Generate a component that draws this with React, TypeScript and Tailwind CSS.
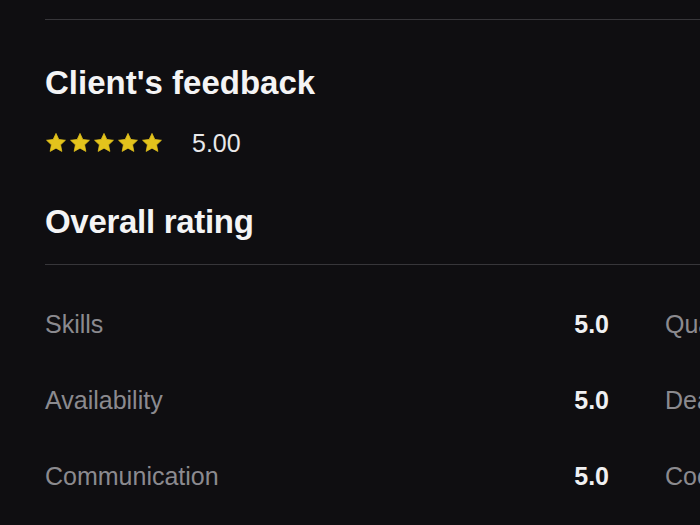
import React from "react";

const rows: [string, string, string, string][] = [
  ["Skills", "5.0", "Quality of work", "5.0"],
  ["Availability", "5.0", "Deadlines", "5.0"],
  ["Communication", "5.0", "Cooperation", "5.0"],
];

const Star = () => (
  <svg width="22" height="22" viewBox="0 0 24 24" className="shrink-0">
    <path
      d="M12 1.5l3.1 6.6 7.2.9-5.3 5 1.4 7.2L12 17.6l-6.4 3.6 1.4-7.2-5.3-5 7.2-.9z"
      fill="#e3c31c"
      stroke="#e3c31c"
      strokeWidth="0.8"
      strokeLinejoin="round"
    />
  </svg>
);

export default function App() {
  return (
    <div
      className="h-[525px] w-[700px] overflow-hidden bg-[#0f0e11] pl-[45px] pt-[19px]"
      style={{ fontFamily: '"Liberation Sans", Arial, sans-serif' }}
    >
      <div className="h-px w-[1300px] bg-[#37363a]" />

      <h2 className="mt-[43px] text-[33px] font-bold leading-[40px] text-[#f4f4f5]">
        Client's feedback
      </h2>

      <div className="mt-[28px] flex h-[24px] items-center">
        <div className="flex gap-[2px]">
          <Star />
          <Star />
          <Star />
          <Star />
          <Star />
        </div>
        <span className="ml-[29px] text-[25px] leading-[24px] text-[#e8e8ea]">5.00</span>
      </div>

      <h2 className="mt-[47px] text-[33px] font-bold tracking-[-0.3px] leading-[40px] text-[#f4f4f5]">
        Overall rating
      </h2>

      <div className="mt-[22px] h-px w-[1300px] bg-[#37363a]" />

      <div className="mt-[44px] grid w-[1184px] grid-cols-[564px_564px] gap-x-[56px] gap-y-[44px]">
        {rows.map(([a, av, b, bv]) => (
          <React.Fragment key={a}>
            <div className="flex h-[32px] items-center justify-between text-[25px]">
              <span className="text-[#8b8a8f]">{a}</span>
              <span className="font-bold text-[#f0f0f2]">{av}</span>
            </div>
            <div className="flex h-[32px] items-center justify-between text-[25px]">
              <span className="text-[#8b8a8f]">{b}</span>
              <span className="font-bold text-[#f0f0f2]">{bv}</span>
            </div>
          </React.Fragment>
        ))}
      </div>
    </div>
  );
}
